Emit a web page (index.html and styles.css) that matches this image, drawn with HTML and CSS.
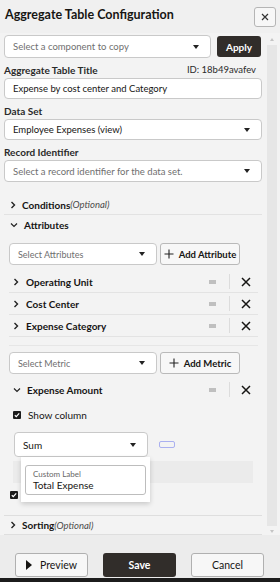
FILE: index.html
```html
<!DOCTYPE html>
<html lang="en">
<head>
    <meta charset="UTF-8">
    <meta name="viewport" content="width=device-width, initial-scale=1.0">
    <title>Aggregate Table Configuration</title>
    <link rel="stylesheet" href="styles.css">
</head>
<body>
    <div class="dialog">
        <div class="dlg-head">
            <h1>Aggregate Table Configuration</h1>
            <button class="close-btn" type="button">
                <svg width="8" height="8" viewBox="0 0 8 8"><path d="M1 1L7 7M7 1L1 7" stroke="#333" stroke-width="1.2"/></svg>
            </button>
        </div>

        <div class="dlg-main">
            <div class="content">
                <!-- copy from component -->
                <div class="copy-row">
                    <div class="select placeholder grow">Select a component to copy<span class="caret"></span></div>
                    <button class="btn-dark apply-btn" type="button">Apply</button>
                </div>

                <div class="label-row">
                    <span class="field-label">Aggregate Table Title</span>
                    <span class="field-id">ID: 18b49avafev</span>
                </div>
                <div class="input">Expense by cost center and Category</div>

                <div class="field-label block">Data Set</div>
                <div class="select">Employee Expenses (view)<span class="caret"></span></div>

                <div class="field-label block">Record Identifier</div>
                <div class="select placeholder tall">Select a record identifier for the data set.<span class="caret"></span></div>

                <!-- sections -->
                <div class="section conditions">
                    <svg class="chev" width="6" height="8" viewBox="0 0 6 8"><path d="M1.5 1L4.5 4L1.5 7" fill="none" stroke="#222" stroke-width="1.4"/></svg>
                    <span class="sec-title">Conditions</span><span class="optional">(Optional)</span>
                </div>

                <div class="section">
                    <svg class="chev" width="8" height="6" viewBox="0 0 8 6"><path d="M1 1.5L4 4.5L7 1.5" fill="none" stroke="#222" stroke-width="1.2"/></svg>
                    <span class="sec-title">Attributes</span>
                </div>

                <div class="add-row">
                    <div class="select placeholder small">Select Attributes<span class="caret"></span></div>
                    <button class="btn-light add-btn" type="button">
                        <svg width="10" height="10" viewBox="0 0 10 10"><path d="M5 0.5V9.5M0.5 5H9.5" stroke="#222" stroke-width="1.1"/></svg>
                        Add Attribute
                    </button>
                </div>

                <div class="items">
                    <div class="item">
                        <svg class="chev" width="6" height="8" viewBox="0 0 6 8"><path d="M1.5 1L4.5 4L1.5 7" fill="none" stroke="#222" stroke-width="1.4"/></svg>
                        <span class="item-name">Operating Unit</span>
                        <span class="handle"></span>
                        <span class="vsep"></span>
                        <svg class="remove" width="10" height="10" viewBox="0 0 10 10"><path d="M1 1L9 9M9 1L1 9" stroke="#161513" stroke-width="1.5"/></svg>
                    </div>
                    <div class="item">
                        <svg class="chev" width="6" height="8" viewBox="0 0 6 8"><path d="M1.5 1L4.5 4L1.5 7" fill="none" stroke="#222" stroke-width="1.4"/></svg>
                        <span class="item-name">Cost Center</span>
                        <span class="handle"></span>
                        <span class="vsep"></span>
                        <svg class="remove" width="10" height="10" viewBox="0 0 10 10"><path d="M1 1L9 9M9 1L1 9" stroke="#161513" stroke-width="1.5"/></svg>
                    </div>
                    <div class="item">
                        <svg class="chev" width="6" height="8" viewBox="0 0 6 8"><path d="M1.5 1L4.5 4L1.5 7" fill="none" stroke="#222" stroke-width="1.4"/></svg>
                        <span class="item-name">Expense Category</span>
                        <span class="handle"></span>
                        <span class="vsep"></span>
                        <svg class="remove" width="10" height="10" viewBox="0 0 10 10"><path d="M1 1L9 9M9 1L1 9" stroke="#161513" stroke-width="1.5"/></svg>
                    </div>
                </div>
                <div class="group-sep"></div>

                <div class="add-row metric-row">
                    <div class="select placeholder small">Select Metric<span class="caret"></span></div>
                    <button class="btn-light add-btn" type="button">
                        <svg width="10" height="10" viewBox="0 0 10 10"><path d="M5 0.5V9.5M0.5 5H9.5" stroke="#222" stroke-width="1.1"/></svg>
                        Add Metric
                    </button>
                </div>

                <div class="item open">
                    <svg class="chev" width="8" height="6" viewBox="0 0 8 6"><path d="M1 1.5L4 4.5L7 1.5" fill="none" stroke="#222" stroke-width="1.2"/></svg>
                    <span class="item-name">Expense Amount</span>
                    <span class="handle"></span>
                    <span class="vsep"></span>
                    <svg class="remove" width="10" height="10" viewBox="0 0 10 10"><path d="M1 1L9 9M9 1L1 9" stroke="#161513" stroke-width="1.5"/></svg>
                </div>

                <div class="check-row">
                    <span class="checkbox"><svg width="8" height="8" viewBox="0 0 8 8"><path d="M1.8 4.2L3.3 5.6L6.2 2.4" fill="none" stroke="#fff" stroke-width="1.2"/></svg></span>
                    <span>Show column</span>
                </div>

                <div class="agg-row">
                    <div class="select sum-select">Sum<span class="caret"></span></div>
                    <span class="focus-tag"></span>

                    <div class="popup">
                        <div class="popup-field">
                            <span class="popup-label">Custom Label</span>
                            <span class="popup-value">Total Expense</span>
                        </div>
                    </div>
                </div>
                <div class="hidden-field"></div>

                <div class="check-row second">
                    <span class="checkbox"><svg width="8" height="8" viewBox="0 0 8 8"><path d="M1.8 4.2L3.3 5.6L6.2 2.4" fill="none" stroke="#fff" stroke-width="1.2"/></svg></span>
                </div>

                <div class="section sorting">
                    <svg class="chev" width="6" height="8" viewBox="0 0 6 8"><path d="M1.5 1L4.5 4L1.5 7" fill="none" stroke="#222" stroke-width="1.4"/></svg>
                    <span class="sec-title">Sorting</span><span class="optional">(Optional)</span>
                </div>
            </div>

            <div class="scrollbar">
                <span class="arrow up"></span>
                <span class="thumb"></span>
                <span class="arrow down"></span>
            </div>
        </div>

        <div class="dlg-foot">
            <button class="btn-light foot-btn" type="button"><span class="play"></span>Preview</button>
            <button class="btn-dark foot-btn" type="button">Save</button>
            <button class="btn-light foot-btn" type="button">Cancel</button>
        </div>
    </div>
</body>
</html>
```

FILE: styles.css
```css
* {
    margin: 0;
    padding: 0;
    box-sizing: border-box;
}

body {
    font-family: Lato, "Open Sans", sans-serif;
    font-size: 10px;
    color: #161513;
    background: #f3f3f3;
}

button {
    font-family: inherit;
}

.dialog {
    width: 280px;
    height: 582px;
    display: flex;
    flex-direction: column;
    border-bottom: 4px solid #1c1c1c;
    overflow: hidden;
}

/* header */
.dlg-head {
    height: 33px;
    flex: none;
    display: flex;
    align-items: center;
    justify-content: space-between;
    padding: 0 4px 4px 5px;
    background: #f0f0f0;
}

.dlg-head h1 {
    font-size: 12.5px;
    font-weight: 700;
    color: #161513;
}

.close-btn {
    width: 22px;
    height: 20px;
    margin-top: 4px;
    background: #f7f7f7;
    border: 1px solid #b5b5b5;
    border-radius: 3px;
    display: flex;
    align-items: center;
    justify-content: center;
}

/* main */
.dlg-main {
    flex: 1;
    display: flex;
    min-height: 0;
}

.content {
    width: 266px;
    padding: 2px 4px 0 4px;
}

.scrollbar {
    flex: 1;
    display: flex;
    flex-direction: column;
    align-items: center;
    padding-right: 2px;
}

.scrollbar .thumb {
    flex: 1;
    width: 10px;
    margin: 4px 0;
    background: #e6e6e6;
}

.scrollbar .arrow {
    width: 0;
    height: 0;
    border-left: 2.5px solid transparent;
    border-right: 2.5px solid transparent;
    margin-top: 5px;
}

.scrollbar .up {
    border-bottom: 3px solid #c4c4c4;
}

.scrollbar .down {
    border-top: 3px solid #c4c4c4;
    margin: 0 0 2px;
}

/* fields */
.select,
.input {
    position: relative;
    height: 21px;
    background: #fff;
    border: 1px solid #c9c9c9;
    border-radius: 4px;
    display: flex;
    align-items: center;
    padding: 0 8px;
    font-size: 9.5px;
    color: #161513;
}

.select.placeholder {
    color: #6f6f6f;
}

.select.tall {
    height: 22px;
}

.caret {
    position: absolute;
    right: 11px;
    top: 50%;
    margin-top: -2px;
    width: 0;
    height: 0;
    border-left: 3.5px solid transparent;
    border-right: 3.5px solid transparent;
    border-top: 4px solid #222;
}

.copy-row {
    display: flex;
    gap: 6px;
    align-items: center;
}

.copy-row .grow {
    width: 207px;
    height: 23px;
}

.btn-dark {
    background: #312d2a;
    color: #fff;
    border: none;
    border-radius: 3px;
    font-weight: 700;
}

.btn-light {
    background: #f7f7f7;
    color: #161513;
    border: 1px solid #b9b9b9;
    border-radius: 3px;
}

.apply-btn {
    width: 44px;
    height: 21px;
    font-size: 10px;
}

.label-row {
    display: flex;
    justify-content: space-between;
    margin-top: 6px;
    padding-right: 6px;
    line-height: 12px;
}

.field-label {
    font-size: 10px;
    font-weight: 700;
    color: #2a2a2a;
    line-height: 12px;
}

.field-label.block {
    display: block;
    margin-top: 6px;
}

.field-id {
    font-size: 9.5px;
    color: #2a2a2a;
}

.label-row + .input,
.field-label.block + .select {
    margin-top: 2px;
}

/* sections */
.section {
    display: flex;
    align-items: center;
    height: 20px;
    padding-left: 6px;
    font-size: 10px;
}

.section .chev {
    margin-right: 6px;
}

.sec-title {
    font-weight: 700;
}

.optional {
    font-style: italic;
    color: #4a4a4a;
    font-size: 9.5px;
}

.conditions {
    margin-top: 13px;
    border-bottom: 1px solid #e2e2e2;
}

.sorting {
    margin-top: 13px;
    border-top: 1px solid #dedede;
    border-bottom: 1px solid #dedede;
}

.add-row {
    display: flex;
    gap: 3px;
    margin: 8px 0 0 5px;
}

.add-row .small {
    width: 148px;
    height: 22px;
    font-size: 9px;
}

.add-btn {
    width: 80px;
    height: 22px;
    display: flex;
    align-items: center;
    justify-content: center;
    gap: 5px;
    font-size: 9.5px;
    font-weight: 700;
    white-space: nowrap;
}

.metric-row {
    margin-top: 6px;
}

.items {
    margin: 6px 4px 0 5px;
}

.item {
    display: flex;
    align-items: center;
    height: 22px;
    padding-left: 4px;
    border-bottom: 1px solid #e3e3e3;
    font-size: 10px;
}

.item .chev {
    margin-right: 7px;
}

.item-name {
    flex: 1;
    font-weight: 700;
}

.handle {
    width: 7px;
    height: 4px;
    margin-right: 13px;
    background: radial-gradient(circle, #bdbdbd 0.7px, transparent 0.9px) 0 0 / 2px 2px;
}

.vsep {
    width: 1px;
    height: 15px;
    background: #dcdcdc;
    margin-right: 11px;
}

.remove {
    margin-right: 7px;
}

.group-sep {
    height: 1px;
    margin: 8px 4px 0 5px;
    background: #e6e6e6;
}

.item.open {
    margin: 6px 4px 0 5px;
    height: 19px;
    border-bottom: none;
}

.item.open .chev {
    margin-right: 6px;
}

.check-row {
    display: flex;
    align-items: center;
    gap: 7px;
    height: 14px;
    margin: 9px 0 0 9px;
    font-size: 10px;
}

.checkbox {
    width: 8px;
    height: 8px;
    background: #1b1b1b;
    border-radius: 1px;
    display: flex;
}

.check-row.second {
    margin: 5px 0 0 6px;
}

.agg-row {
    position: relative;
    display: flex;
    align-items: center;
    margin: 10px 0 0 10px;
}

.sum-select {
    width: 134px;
    height: 25px;
    font-size: 10px;
}

.focus-tag {
    width: 16px;
    height: 7px;
    margin-left: 11px;
    border: 1.5px solid #aab0f0;
    border-radius: 2px;
}

.popup {
    position: absolute;
    left: 7px;
    top: 25px;
    width: 129px;
    height: 45px;
    background: #fff;
    box-shadow: 0 2px 5px rgba(0, 0, 0, 0.18);
    padding: 8px 4px 0 4px;
    z-index: 2;
}

.popup-field {
    height: 30px;
    border: 1px solid #bdbdbd;
    border-radius: 3px;
    display: flex;
    flex-direction: column;
    justify-content: center;
    padding: 0 7px;
}

.popup-label {
    font-size: 8px;
    color: #666;
    line-height: 10px;
}

.popup-value {
    font-size: 10px;
    line-height: 12px;
}

.hidden-field {
    height: 22px;
    margin: 4px 9px 0 9px;
    background: #ebebeb;
}

/* footer */
.dlg-foot {
    height: 43px;
    flex: none;
    display: flex;
    align-items: flex-start;
    gap: 15px;
    padding: 18px 0 0 15px;
    background: #ececec;
}

.foot-btn {
    width: 73px;
    height: 24px;
    font-size: 10.5px;
    display: flex;
    align-items: center;
    justify-content: center;
}

.btn-light.foot-btn {
    border-color: #b0b0b0;
}

.play {
    width: 0;
    height: 0;
    border-top: 5px solid transparent;
    border-bottom: 5px solid transparent;
    border-left: 6px solid #161513;
    margin-right: 8px;
}
```
